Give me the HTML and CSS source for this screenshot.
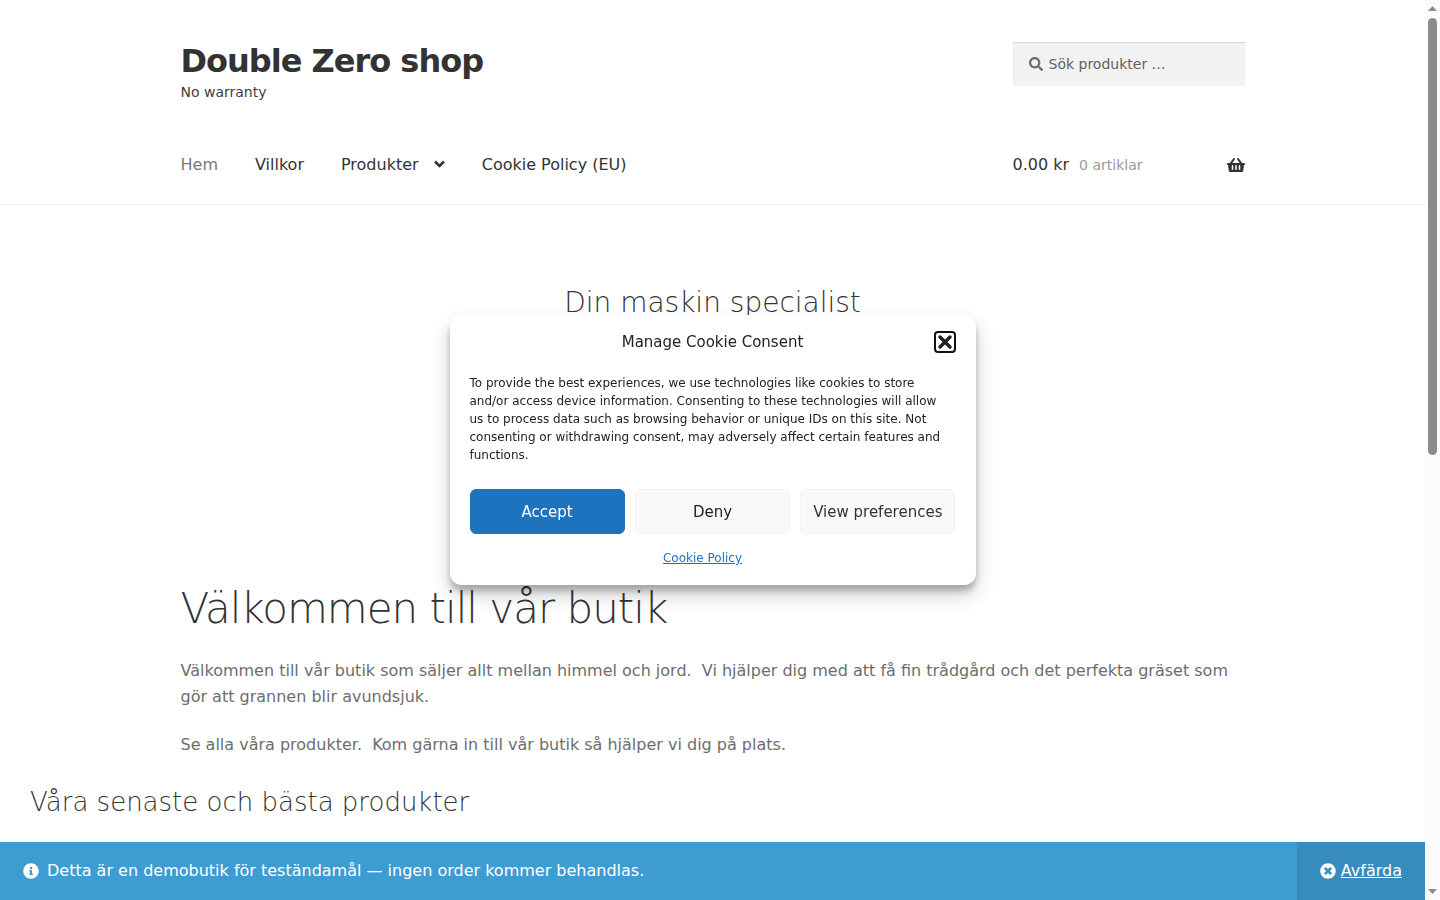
FILE: index.html
```html
<!DOCTYPE html>
<html lang="sv">
<head>
<meta charset="utf-8">
<meta name="viewport" content="width=device-width, initial-scale=1.0">
<title>Double Zero shop</title>
<link rel="stylesheet" href="styles.css">
</head>
<body>

<div class="page">

    <header class="site-header">
        <div class="col-full">
            <div class="header-top">
                <div class="site-branding">
                    <a class="site-title" href="#">Double Zero shop</a>
                    <p class="site-description">No warranty</p>
                </div>
                <form class="site-search" role="search">
                    <svg class="search-icon" viewBox="0 0 512 512" aria-hidden="true"><path d="M505 442.700L405.300 343c-4.500-4.500-10.600-7-17-7H372c27.600-35.300 44-79.700 44-128C416 93.100 322.900 0 208 0S0 93.100 0 208s93.100 208 208 208c48.300 0 92.700-16.400 128-44v16.300c0 6.400 2.500 12.500 7 17l99.700 99.700c9.400 9.400 24.600 9.400 33.900 0l28.300-28.300c9.400-9.400 9.400-24.600.1-34zM208 336c-70.700 0-128-57.200-128-128 0-70.700 57.200-128 128-128 70.700 0 128 57.200 128 128 0 70.700-57.200 128-128 128z"/></svg>
                    <input class="search-field" type="search" placeholder="Sök produkter …" aria-label="Sök produkter">
                </form>
            </div>

            <div class="header-nav">
                <nav class="main-navigation">
                    <a class="current" href="#">Hem</a>
                    <a href="#">Villkor</a>
                    <a href="#">Produkter
                        <svg class="chevron" viewBox="0 0 11 8" aria-hidden="true"><path d="M1 1.500L5.500 6L10 1.500"/></svg>
                    </a>
                    <a href="#">Cookie Policy (EU)</a>
                </nav>
                <a class="cart-contents" href="#">
                    <span class="amount">0.00 kr</span>
                    <span class="count">0 artiklar</span>
                    <svg class="basket" viewBox="0 0 576 512" aria-hidden="true"><path d="M576 216v16c0 13.300-10.700 24-24 24h-8l-26.100 182.800C514.500 462.400 494.300 480 470.400 480H105.600c-23.900 0-44.100-17.600-47.500-41.200L32 256h-8c-13.300 0-24-10.700-24-24v-16c0-13.300 10.700-24 24-24h67.300l106.800-146.800c10.400-14.300 30.400-17.500 44.700-7.100 14.300 10.400 17.500 30.400 7.100 44.700L170.500 192h235.100L326.100 82.800c-10.400-14.300-7.200-34.300 7.100-44.700 14.300-10.400 34.300-7.200 44.700 7.100L484.700 192H552c13.300 0 24 10.700 24 24zM312 392V280c0-13.300-10.700-24-24-24s-24 10.700-24 24v112c0 13.300 10.700 24 24 24s24-10.700 24-24zm112 0V280c0-13.300-10.700-24-24-24s-24 10.700-24 24v112c0 13.300 10.700 24 24 24s24-10.700 24-24zm-224 0V280c0-13.300-10.700-24-24-24s-24 10.700-24 24v112c0 13.300 10.700 24 24 24s24-10.700 24-24z"/></svg>
                </a>
            </div>
        </div>
    </header>

    <main>
        <section class="hero">
            <h2>Din maskin specialist</h2>
        </section>

        <article class="col-full welcome">
            <h1>Välkommen till vår butik</h1>
            <p>Välkommen till vår butik som säljer allt mellan himmel och jord.&nbsp; Vi hjälper dig med att få fin trådgård och det perfekta gräset som gör att grannen blir avundsjuk.</p>
            <p>Se alla våra produkter.&nbsp; Kom gärna in till vår butik så hjälper vi dig på plats.</p>
        </article>

        <section class="products">
            <h2>Våra senaste och bästa produkter</h2>
        </section>
    </main>
</div>

<!-- demo store notice -->
<div class="store-notice">
    <p class="notice-text">
        <svg class="notice-icon" viewBox="0 0 512 512" aria-hidden="true"><path d="M256 8C119 8 8 119.100 8 256c0 137 111 248 248 248s248-111 248-248C504 119.100 393 8 256 8zm0 110c23.200 0 42 18.800 42 42s-18.800 42-42 42-42-18.800-42-42 18.800-42 42-42zm56 254c0 6.600-5.400 12-12 12h-88c-6.600 0-12-5.400-12-12v-24c0-6.600 5.400-12 12-12h12v-64h-12c-6.600 0-12-5.400-12-12v-24c0-6.600 5.400-12 12-12h64c6.600 0 12 5.400 12 12v100h12c6.600 0 12 5.400 12 12v24z"/></svg>
        Detta är en demobutik för teständamål — ingen order kommer behandlas.
    </p>
    <a class="dismiss" href="#">
        <svg class="notice-icon" viewBox="0 0 512 512" aria-hidden="true"><path d="M256 8C119 8 8 119 8 256s111 248 248 248 248-111 248-248S393 8 256 8zm121.600 313.100c4.700 4.700 4.700 12.300 0 17L338 377.600c-4.700 4.700-12.300 4.700-17 0L256 312l-65.100 65.600c-4.700 4.700-12.300 4.700-17 0L134.400 338c-4.700-4.700-4.700-12.300 0-17l65.600-65-65.600-65.100c-4.700-4.700-4.700-12.300 0-17l39.600-39.600c4.700-4.700 12.300-4.700 17 0l65 65.700 65.100-65.600c4.700-4.700 12.300-4.700 17 0l39.600 39.600c4.700 4.700 4.700 12.300 0 17L312 256l65.600 65.100z"/></svg>
        <span>Avfärda</span>
    </a>
</div>

<!-- cookie banner -->
<div class="cookie-overlay">
    <div class="cookie-banner" role="dialog" aria-labelledby="cookie-title">
        <div class="cookie-header">
            <div class="cookie-title" id="cookie-title">Manage Cookie Consent</div>
            <button class="cookie-close" type="button" aria-label="Close dialog">
                <svg viewBox="0 0 18 18" aria-hidden="true"><path d="M4 4L14 14M14 4L4 14"/></svg>
            </button>
        </div>
        <p class="cookie-message">To provide the best experiences, we use technologies like cookies to store and/or access device information. Consenting to these technologies will allow us to process data such as browsing behavior or unique IDs on this site. Not consenting or withdrawing consent, may adversely affect certain features and functions.</p>
        <div class="cookie-buttons">
            <button class="btn btn-accept" type="button">Accept</button>
            <button class="btn btn-deny" type="button">Deny</button>
            <button class="btn" type="button">View preferences</button>
        </div>
        <div class="cookie-links">
            <a href="#">Cookie Policy</a>
        </div>
    </div>
</div>

<div class="scrollbar" aria-hidden="true">
    <svg class="arrow" viewBox="0 0 9 5"><path d="M0 5L4.500 0L9 5z"/></svg>
    <div class="track"><div class="thumb"></div></div>
    <svg class="arrow" viewBox="0 0 9 5"><path d="M0 0L4.500 5L9 0z"/></svg>
</div>

</body>
</html>
```
FILE: styles.css
```css
* {
    box-sizing: border-box;
}

html, body {
    margin: 0;
    padding: 0;
    height: 100%;
    overflow: hidden;
}

body {
    font-family: "DejaVu Sans", sans-serif;
    font-size: 16px;
    line-height: 26px;
    color: #6d6d6d;
    background: #fff;
}

p, h1, h2 {
    margin: 0;
}

h1, h2 {
    font-weight: 300;
    color: #333;
}

a {
    color: #333;
    text-decoration: none;
}

.page {
    margin-right: 15px;
}

.col-full {
    max-width: 1064px;
    margin: 0 auto;
}

/* header */
.site-header {
    padding: 42px 0 26px;
    border-bottom: 1px solid #f0f0f0;
}

.header-top,
.header-nav {
    display: grid;
    grid-template-columns: 1fr 232px;
    align-items: start;
}

.header-top {
    margin-bottom: 48px;
}

.site-title {
    display: block;
    font-size: 32px;
    line-height: 38px;
    font-weight: 700;
    letter-spacing: -1px;
}

.site-description {
    font-size: 14px;
    line-height: 24px;
    color: #404040;
}

.site-search {
    display: flex;
    align-items: center;
    gap: 6px;
    height: 44px;
    padding: 0 16px;
    background: #f2f2f2;
    box-shadow: inset 0 1px 1px rgba(0, 0, 0, 0.125);
}

.search-icon {
    flex: none;
    width: 14px;
    height: 14px;
    fill: #6d6d6d;
}

.search-field {
    flex: 1;
    min-width: 0;
    padding: 0;
    border: 0;
    outline: 0;
    background: none;
    font-family: inherit;
    font-size: 14px;
    line-height: 20px;
    color: #43454b;
}

.search-field::placeholder {
    color: #616161;
}

.main-navigation {
    display: flex;
    gap: 37px;
}

.main-navigation .current {
    color: #777;
}

.chevron {
    width: 11px;
    height: 8px;
    margin-left: 10px;
    vertical-align: 2px;
    fill: none;
    stroke: #333;
    stroke-width: 2.500;
}

.cart-contents {
    display: flex;
    align-items: center;
    gap: 10px;
}

.count {
    font-size: 14px;
    color: #999;
}

.basket {
    width: 18px;
    height: 16px;
    margin-left: auto;
    fill: #333;
}

/* content */
.hero {
    min-height: 378px;
    padding-top: 80px;
    text-align: center;
}

.hero h2 {
    font-size: 28px;
    line-height: 35px;
}

.welcome h1 {
    margin-bottom: 24px;
    font-size: 42px;
    line-height: 51px;
    letter-spacing: -1px;
}

.welcome p {
    margin-bottom: 22px;
}

.products {
    padding: 7px 30px;
}

.products h2 {
    font-size: 26px;
    line-height: 31px;
}

/* store notice */
.store-notice {
    position: fixed;
    left: 0;
    right: 15px;
    bottom: 0;
    display: flex;
    justify-content: space-between;
    background: #3d9cd2;
    color: #fff;
}

.notice-text {
    display: flex;
    align-items: center;
    gap: 8px;
    padding: 16px 23px;
}

.notice-icon {
    flex: none;
    width: 16px;
    height: 16px;
    fill: #fff;
}

.dismiss {
    display: flex;
    align-items: center;
    gap: 5px;
    padding: 16px 23px;
    background: #378cbd;
    color: #fff;
}

.dismiss span {
    text-decoration: underline;
}

/* cookie banner */
.cookie-overlay {
    position: fixed;
    top: 0;
    left: 0;
    right: 15px;
    bottom: 0;
    display: flex;
    align-items: center;
    justify-content: center;
}

.cookie-banner {
    width: 526px;
    max-width: 100%;
    padding: 16px 20px 18px;
    border-radius: 12px;
    background: #fff;
    color: #222;
    font-size: 12px;
    line-height: 18px;
    box-shadow: rgba(0, 0, 0, 0.19) 0 10px 20px, rgba(0, 0, 0, 0.23) 0 6px 6px;
}

.cookie-header {
    display: grid;
    grid-template-columns: 1fr auto 1fr;
    align-items: center;
}

.cookie-title {
    grid-column: 2;
    font-size: 15px;
    line-height: 22px;
}

.cookie-close {
    justify-self: end;
    width: 22px;
    height: 22px;
    padding: 0;
    border: 2px solid #101010;
    border-radius: 4px;
    background: #fff;
}

.cookie-close svg {
    display: block;
    width: 18px;
    height: 18px;
    stroke: #222;
    stroke-width: 3.500;
    stroke-linecap: round;
}

.cookie-message {
    margin: 21px 0 25px;
    padding-right: 10px;
}

.cookie-buttons {
    display: grid;
    grid-template-columns: 1fr 1fr 1fr;
    gap: 10px;
}

.btn {
    height: 45px;
    padding: 0 10px;
    border: 1px solid #f2f2f2;
    border-radius: 6px;
    background: #f9f9f9;
    color: #333;
    font-family: inherit;
    font-size: 15px;
    line-height: 20px;
    white-space: nowrap;
}

.btn-accept {
    border-color: #1e73be;
    background: #1e73be;
    color: #fff;
}

.btn-deny {
    color: #222;
}

.cookie-links {
    margin-top: 15px;
    padding-right: 20px;
    text-align: center;
}

.cookie-links a {
    color: #1e73be;
    text-decoration: underline;
}

/* scrollbar */
.scrollbar {
    position: fixed;
    top: 0;
    right: 0;
    bottom: 0;
    width: 15px;
    padding: 6px 3px;
    display: flex;
    flex-direction: column;
    align-items: center;
    gap: 7px;
    background: #fcfcfc;
}

.arrow {
    width: 9px;
    height: 5px;
    fill: #8b8b8b;
}

.track {
    flex: 1;
    width: 9px;
}

.thumb {
    height: calc(50% + 5px);
    border-radius: 5px;
    background: #8b8b8b;
}
```
